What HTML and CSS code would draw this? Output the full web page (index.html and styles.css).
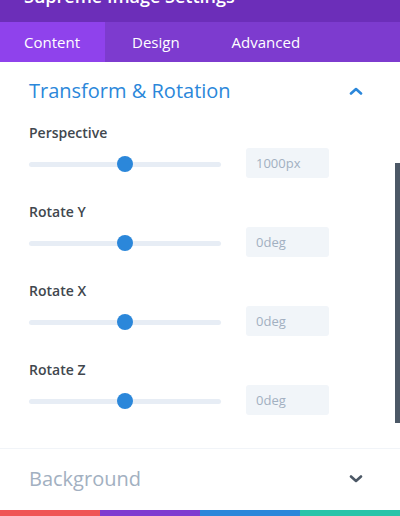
FILE: index.html
```html
<!DOCTYPE html>
<html lang="en">
<head>
  <meta charset="UTF-8">
  <meta name="viewport" content="width=device-width, initial-scale=1.0">
  <title>Supreme Image Settings</title>
  <link rel="stylesheet" href="styles.css">
</head>
<body>
  <div class="modal">
    <div class="header">
      <h1 class="title">Supreme Image Settings</h1>
    </div>

    <div class="tabs">
      <div class="tab active">Content</div>
      <div class="tab">Design</div>
      <div class="tab">Advanced</div>
    </div>

    <div class="panel">
      <div class="toggle open">
        <div class="toggle-head">
          <h2 class="toggle-title">Transform &amp; Rotation</h2>
          <svg class="chevron" width="14" height="8" viewBox="0 0 14 8">
            <path d="M2 6.5 L7 2 L12 6.5" fill="none" stroke="#2b87da" stroke-width="2.6" stroke-linecap="round" stroke-linejoin="round"/>
          </svg>
        </div>

        <div class="field">
          <label class="field-label">Perspective</label>
          <div class="field-row">
            <div class="range"><span class="range-thumb" style="left: 50%"></span></div>
            <div class="value">1000px</div>
          </div>
        </div>

        <div class="field">
          <label class="field-label">Rotate Y</label>
          <div class="field-row">
            <div class="range"><span class="range-thumb" style="left: 50%"></span></div>
            <div class="value">0deg</div>
          </div>
        </div>

        <div class="field">
          <label class="field-label">Rotate X</label>
          <div class="field-row">
            <div class="range"><span class="range-thumb" style="left: 50%"></span></div>
            <div class="value">0deg</div>
          </div>
        </div>

        <div class="field">
          <label class="field-label">Rotate Z</label>
          <div class="field-row">
            <div class="range"><span class="range-thumb" style="left: 50%"></span></div>
            <div class="value">0deg</div>
          </div>
        </div>
      </div>

      <div class="toggle closed">
        <div class="toggle-head">
          <h2 class="toggle-title">Background</h2>
          <svg class="chevron" width="14" height="8" viewBox="0 0 14 8">
            <path d="M2 1.5 L7 6 L12 1.5" fill="none" stroke="#4c5866" stroke-width="2.6" stroke-linecap="round" stroke-linejoin="round"/>
          </svg>
        </div>
      </div>

      <div class="scrollbar"></div>
    </div>

    <div class="footer">
      <span class="footer-red"></span>
      <span class="footer-purple"></span>
      <span class="footer-blue"></span>
      <span class="footer-green"></span>
    </div>
  </div>
</body>
</html>
```

FILE: styles.css
```css
body {
  margin: 0;
  padding: 0;
  font-family: "Open Sans", Arial, sans-serif;
  background: #fff;
  overflow: hidden;
}
.modal {
  width: 400px;
  height: 516px;
  display: flex;
  flex-direction: column;
}
.header {
  flex-shrink: 0;
  height: 22px;
  overflow: hidden;
  background: #6c2eb9;
  padding: 0 24px;
}
.title {
  margin: -15px 0 0;
  font-size: 18px;
  line-height: 22px;
  font-weight: 600;
  color: #fff;
}
.tabs {
  flex-shrink: 0;
  display: flex;
  height: 40px;
  background: #7d3bcf;
}
.tab {
  padding: 0 25px 0 27px;
  line-height: 40px;
  font-size: 15px;
  color: #fff;
}
.tab:first-child {
  padding-left: 24px;
}
.tab.active {
  background: #8f42ec;
}
.panel {
  position: relative;
  flex: 1;
  overflow: hidden;
}
.toggle {
  padding: 15px 37px 33px 29px;
}
.toggle.closed {
  padding-top: 16px;
  padding-bottom: 17px;
  border-top: 1px solid #f1f4f8;
}
.toggle-head {
  display: flex;
  align-items: center;
  justify-content: space-between;
}
.toggle-title {
  margin: 0;
  font-size: 20px;
  line-height: 28px;
  font-weight: 400;
  color: #2b87da;
}
.closed .toggle-title {
  color: #a2b0c1;
}
.chevron {
  display: block;
}
.field {
  margin-top: 18px;
}
.field + .field {
  margin-top: 24px;
}
.field-label {
  display: block;
  font-size: 14px;
  line-height: 20px;
  font-weight: 600;
  color: #41474e;
  margin-bottom: 5px;
}
.field-row {
  display: flex;
  align-items: center;
  gap: 25px;
}
.range {
  position: relative;
  width: 192px;
  height: 5px;
  border-radius: 3px;
  background: #e7edf5;
  margin-top: 2px;
}
.range-thumb {
  position: absolute;
  top: 50%;
  width: 16px;
  height: 16px;
  margin: -8px 0 0 -8px;
  border-radius: 50%;
  background: #2b87da;
}
.value {
  width: 73px;
  height: 30px;
  padding-left: 10px;
  line-height: 30px;
  border-radius: 3px;
  background: #f1f5f9;
  font-size: 13px;
  color: #a2b0c1;
}
.scrollbar {
  position: absolute;
  top: 101px;
  right: 0;
  width: 5px;
  height: 260px;
  background: #4c5866;
}
.footer {
  flex-shrink: 0;
  display: flex;
  height: 6px;
}
.footer span {
  flex: 1;
}
.footer-red { background: #ef5555; }
.footer-purple { background: #7e3bd0; }
.footer-blue { background: #2b87da; }
.footer-green { background: #29c4a9; }
```
